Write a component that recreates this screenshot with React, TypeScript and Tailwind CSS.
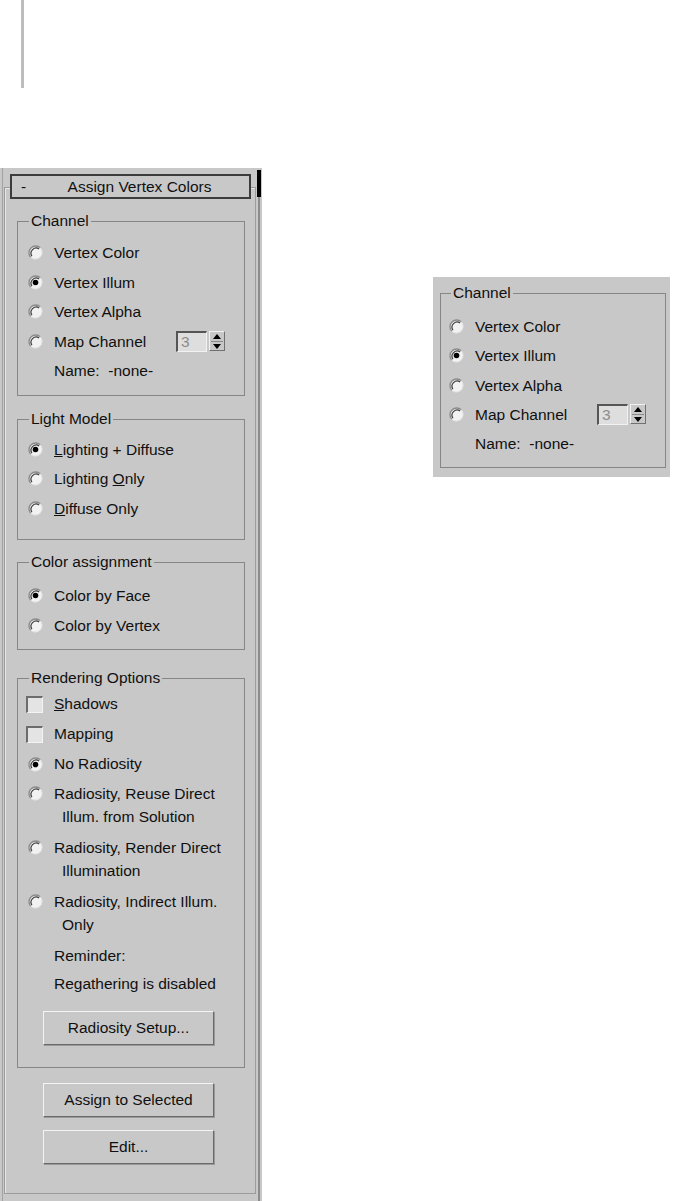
import React from 'react';

function Radio({ checked }: { checked?: boolean }) {
  return (
    <svg width="15" height="15" viewBox="0 0 15 15" className="shrink-0">
      <circle cx="7.5" cy="7.5" r="6.8" fill="#f2f2f2" />
      <path d="M12.3 2.7 A6.8 6.8 0 0 0 2.7 12.3" fill="none" stroke="#8a8a8a" strokeWidth="1.4" />
      <path d="M11.1 3.9 A5.2 5.2 0 0 0 3.9 11.1" fill="none" stroke="#3c3c3c" strokeWidth="1.2" />
      <path d="M12.3 2.7 A6.8 6.8 0 0 1 2.7 12.3" fill="none" stroke="#e2e2e2" strokeWidth="1" />
      {checked && <circle cx="7.5" cy="7.5" r="2.8" fill="#000" />}
    </svg>
  );
}

function Check() {
  return (
    <span className="block shrink-0 w-[17px] h-[17px] bg-[#e4e4e4] border-t-2 border-l-2 border-r border-b border-t-[#6c6c6c] border-l-[#6c6c6c] border-r-[#f4f4f4] border-b-[#f4f4f4]" />
  );
}

function Spinner() {
  return (
    <div className="flex items-center h-[21px]">
      <div className="w-[31px] h-[21px] bg-[#dedede] border-t-2 border-l-2 border-r border-b border-t-[#555] border-l-[#555] border-r-[#f2f2f2] border-b-[#f2f2f2] pl-[3px] text-[#8c8c8c] leading-[17px]">
        3
      </div>
      <div className="ml-[2px] w-[16px] h-[20px] flex flex-col items-center justify-center gap-[2px] border border-t-[#f2f2f2] border-l-[#f2f2f2] border-r-[#707070] border-b-[#707070]">
        <svg width="8" height="5" viewBox="0 0 8 5">
          <path d="M0 5 L4 0 L8 5 Z" fill="#000" />
        </svg>
        <div className="w-[12px] h-px bg-[#8a8a8a]" />
        <svg width="8" height="5" viewBox="0 0 8 5">
          <path d="M0 0 L8 0 L4 5 Z" fill="#000" />
        </svg>
      </div>
    </div>
  );
}

function Btn({ label }: { label: string }) {
  return (
    <div className="w-[171px] h-[34px] flex items-center justify-center bg-[#c8c8c8] border border-t-[#f4f4f4] border-l-[#f4f4f4] border-r-[#6a6a6a] border-b-[#6a6a6a] shadow-[1px_1px_0_#9a9a9a]">
      {label}
    </div>
  );
}

export default function App() {
  return (
    <div
      className="w-[673px] h-[1201px] overflow-hidden bg-white text-[15.5px] text-[#101010]"
      style={{ fontFamily: '"Liberation Sans", Arial, sans-serif' }}
    >
      <div className="ml-[21px] w-[3px] h-[88px] bg-[#bdbdbd]" />

      <div className="mt-[80px] flex items-start">
        {/* main command panel */}
        <div className="flex w-[262px] h-[1033px] bg-[#c8c8c8]">
          <div className="w-[2px]" />
          <div className="w-px bg-[#a2a2a2]" />
          <div className="w-[253px]">
            <div className="ml-[1px] mt-[19px] w-[252px] h-[1007px] border border-[#9c9c9c] shadow-[inset_1px_1px_0_#e6e6e6]">
              {/* rollout header */}
              <div className="ml-[5px] -mt-[14px] w-[241px] h-[25px] flex items-center border-2 border-[#3c3c3c] bg-[#c8c8c8] leading-none">
                <span className="w-[26px] pl-[9px]">-</span>
                <span className="flex-1 text-center pl-[12px]">Assign Vertex Colors</span>
                <span className="w-[20px]" />
              </div>

              <div className="ml-[12px] w-[228px]">
                <fieldset className="mt-[12px] border border-[#868686] pt-[7px] pb-[9px]">
                  <legend className="ml-[11px] px-[2px] leading-[20px]">Channel</legend>
                  <div className="pl-[10px] flex items-center gap-[11px] h-[29.5px]">
                    <Radio />
                    <span>Vertex Color</span>
                  </div>
                  <div className="pl-[10px] flex items-center gap-[11px] h-[29.5px]">
                    <Radio checked />
                    <span>Vertex Illum</span>
                  </div>
                  <div className="pl-[10px] flex items-center gap-[11px] h-[29.5px]">
                    <Radio />
                    <span>Vertex Alpha</span>
                  </div>
                  <div className="pl-[10px] flex items-center gap-[11px] h-[29.5px]">
                    <Radio />
                    <span className="w-[111px]">Map Channel</span>
                    <Spinner />
                  </div>
                  <div className="pl-[36px] flex items-center h-[29.5px]">
                    <span className="whitespace-pre">Name:  -none-</span>
                  </div>
                </fieldset>

                <fieldset className="mt-[13.5px] border border-[#868686] pt-[5.5px] pb-[16px]">
                  <legend className="ml-[11px] px-[2px] leading-[20px]">Light Model</legend>
                  <div className="pl-[10px] flex items-center gap-[11px] h-[29.5px]">
                    <Radio checked />
                    <span>
                      <u>L</u>ighting + Diffuse
                    </span>
                  </div>
                  <div className="pl-[10px] flex items-center gap-[11px] h-[29.5px]">
                    <Radio />
                    <span>
                      Lighting <u>O</u>nly
                    </span>
                  </div>
                  <div className="pl-[10px] flex items-center gap-[11px] h-[29.5px]">
                    <Radio />
                    <span>
                      <u>D</u>iffuse Only
                    </span>
                  </div>
                </fieldset>

                <fieldset className="mt-[12px] border border-[#868686] pt-[9px] pb-[9px]">
                  <legend className="ml-[11px] px-[2px] leading-[20px]">Color assignment</legend>
                  <div className="pl-[10px] flex items-center gap-[11px] h-[29.5px]">
                    <Radio checked />
                    <span>Color by Face</span>
                  </div>
                  <div className="pl-[10px] flex items-center gap-[11px] h-[29.5px]">
                    <Radio />
                    <span>Color by Vertex</span>
                  </div>
                </fieldset>

                <fieldset className="mt-[18px] border border-[#868686] pt-px pb-[22px]">
                  <legend className="ml-[11px] px-[2px] leading-[20px]">Rendering Options</legend>
                  <div className="pl-[8px] flex items-center gap-[11px] h-[30px]">
                    <Check />
                    <span>
                      <u>S</u>hadows
                    </span>
                  </div>
                  <div className="pl-[8px] flex items-center gap-[11px] h-[30px]">
                    <Check />
                    <span>Mapping</span>
                  </div>
                  <div className="pl-[10px] flex items-center gap-[11px] h-[30px]">
                    <Radio checked />
                    <span>No Radiosity</span>
                  </div>
                  <div className="pl-[10px] flex items-start gap-[11px] h-[54px] pt-[3px] leading-[23px]">
                    <div className="h-[23px] flex items-center">
                      <Radio />
                    </div>
                    <div>
                      <div>Radiosity, Reuse Direct</div>
                      <div className="pl-[8px]">Illum. from Solution</div>
                    </div>
                  </div>
                  <div className="pl-[10px] flex items-start gap-[11px] h-[54px] pt-[3px] leading-[23px]">
                    <div className="h-[23px] flex items-center">
                      <Radio />
                    </div>
                    <div>
                      <div>Radiosity, Render Direct</div>
                      <div className="pl-[8px]">Illumination</div>
                    </div>
                  </div>
                  <div className="pl-[10px] flex items-start gap-[11px] h-[54px] pt-[3px] leading-[23px]">
                    <div className="h-[23px] flex items-center">
                      <Radio />
                    </div>
                    <div>
                      <div>Radiosity, Indirect Illum.</div>
                      <div className="pl-[8px]">Only</div>
                    </div>
                  </div>
                  <div className="pl-[36px] flex items-center h-[29px]">Reminder:</div>
                  <div className="pl-[36px] flex items-center h-[27px]">Regathering is disabled</div>
                  <div className="mt-[14px] ml-[25px]">
                    <Btn label="Radiosity Setup..." />
                  </div>
                </fieldset>
              </div>

              <div className="ml-[38px] mt-[15px]">
                <Btn label="Assign to Selected" />
              </div>
              <div className="ml-[38px] mt-[13px]">
                <Btn label="Edit..." />
              </div>
            </div>
          </div>
          {/* right edge strip */}
          <div className="w-[6px] flex flex-col">
            <div className="mt-[2px] ml-[1px] w-[4px] h-[27px] bg-black" />
            <div className="ml-[2px] w-[2px] flex-1 bg-[#8c8c8c]" />
          </div>
        </div>

        {/* detail panel */}
        <div className="ml-[171px] mt-[109px] w-[237px] h-[200px] bg-[#c8c8c8] pl-[7px] pt-[6px]">
          <fieldset className="w-[226px] border border-[#868686] pt-[9px] pb-[9px]">
            <legend className="ml-[10px] px-[2px] leading-[20px]">Channel</legend>
            <div className="pl-[8px] flex items-center gap-[11px] h-[29.25px]">
              <Radio />
              <span>Vertex Color</span>
            </div>
            <div className="pl-[8px] flex items-center gap-[11px] h-[29.25px]">
              <Radio checked />
              <span>Vertex Illum</span>
            </div>
            <div className="pl-[8px] flex items-center gap-[11px] h-[29.25px]">
              <Radio />
              <span>Vertex Alpha</span>
            </div>
            <div className="pl-[8px] flex items-center gap-[11px] h-[29.25px]">
              <Radio />
              <span className="w-[111px]">Map Channel</span>
              <Spinner />
            </div>
            <div className="pl-[34px] flex items-center h-[29.25px]">
              <span className="whitespace-pre">Name:  -none-</span>
            </div>
          </fieldset>
        </div>
      </div>
    </div>
  );
}
